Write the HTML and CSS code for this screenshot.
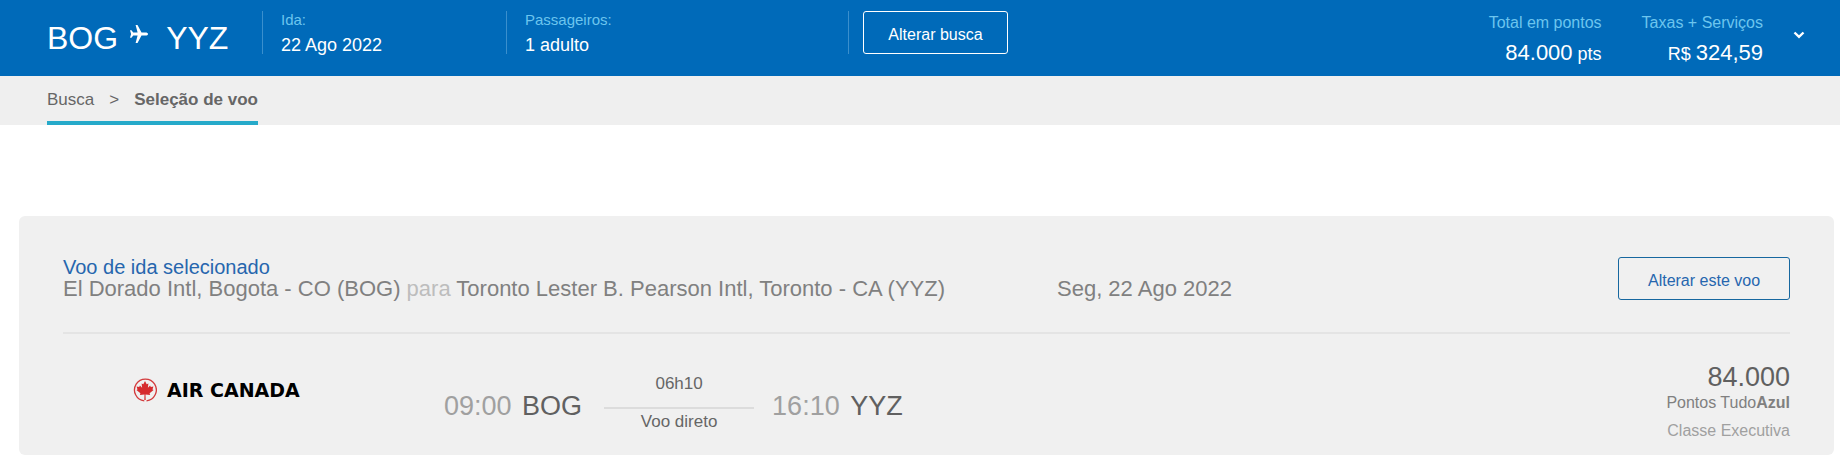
FILE: index.html
```
<!DOCTYPE html>
<html lang="pt-BR">
<head>
    <meta charset="UTF-8">
    <meta name="viewport" content="width=device-width, initial-scale=1.0">
    <title>Seleção de voo</title>
    <link rel="stylesheet" href="styles.css">
</head>
<body>
    <header class="header">
        <div class="trip">
            <span>BOG</span>
            <svg class="plane" viewBox="0 0 18 18" width="18" height="18">
                <path d="M18 9c0-1-1.200-1.500-2.400-1.500H11.500L7.500 0H5.600L7.600 7.500H3.200L1.500 5.200H0L1.100 9 0 12.800h1.500l1.700-2.300h4.400L5.600 18h1.900l4-7.500h4.100C16.800 10.500 18 10 18 9z" fill="#fff"/>
            </svg>
            <span>YYZ</span>
        </div>
        <div class="field date-field">
            <div class="label">Ida:</div>
            <div class="value">22 Ago 2022</div>
        </div>
        <div class="field passengers">
            <div class="label">Passageiros:</div>
            <div class="value">1 adulto</div>
        </div>
        <div class="change">
            <button class="btn btn-light" type="button">Alterar busca</button>
        </div>
        <div class="totals">
            <div class="total">
                <div class="total-label">Total em pontos</div>
                <div class="total-value"><b>84.000</b> pts</div>
            </div>
            <div class="total">
                <div class="total-label">Taxas + Serviços</div>
                <div class="total-value">R$ <b>324,59</b></div>
            </div>
            <button class="toggle" type="button" aria-label="Detalhes">
                <svg viewBox="0 0 12 8" width="12" height="8">
                    <path d="M1.500 1.500L6 5.800l4.500-4.300" fill="none" stroke="#fff" stroke-width="2.400"/>
                </svg>
            </button>
        </div>
    </header>

    <nav class="breadcrumb">
        <div class="steps">
            <a href="#">Busca</a>
            <span>&gt;</span>
            <strong>Seleção de voo</strong>
        </div>
    </nav>

    <main class="card">
        <div class="card-top">
            <div>
                <h2>Voo de ida selecionado</h2>
                <div class="route">
                    <div class="airports">El Dorado Intl, Bogota - CO (BOG) <span class="to">para</span> Toronto Lester B. Pearson Intl, Toronto - CA (YYZ)</div>
                    <div>Seg, 22 Ago 2022</div>
                </div>
            </div>
            <button class="btn btn-blue" type="button">Alterar este voo</button>
        </div>
        <div class="details">
            <div class="airline">
                <svg viewBox="0 0 24 24" width="24" height="24">
                    <path d="M11.300 22.800A10.900 10.900 0 1 1 13.500 22.800" fill="none" stroke="#d33a3c" stroke-width="1.300"/>
                    <path d="M12 3l1.700 3.300 1.700-.8-.5 4.300 2.200-2.200.7 1.400 2.600-.4-.9 2.800 1.100.7-4 3.100.5 1.800-4.600-.5.200 5.500h-1.400l.2-5.500-4.600.5.500-1.800-4-3.100 1.100-.7-.9-2.800 2.600.4.700-1.400 2.200 2.200-.5-4.300 1.700.8z" fill="#d62b2e"/>
                </svg>
                <span>AIR CANADA</span>
            </div>
            <div class="flight">
                <div class="time">09:00 <span>BOG</span></div>
                <div class="duration">
                    <div>06h10</div>
                    <div class="line"></div>
                    <div>Voo direto</div>
                </div>
                <div class="time">16:10 <span>YYZ</span></div>
            </div>
            <div class="price">
                <div class="points">84.000</div>
                <div class="program">Pontos Tudo<b>Azul</b></div>
                <div class="class">Classe Executiva</div>
            </div>
        </div>
    </main>
</body>
</html>
```
FILE: styles.css
```
* {
    box-sizing: border-box;
}
body {
    margin: 0;
    font-family: "Liberation Sans", Arial, sans-serif;
    font-size: 16px;
    background-color: #fff;
}
.btn {
    height: 43px;
    padding: 4px 0 0;
    border-radius: 3px;
    background: none;
    font-family: inherit;
    font-size: 16px;
    cursor: pointer;
}

/* header */
.header {
    display: flex;
    align-items: flex-start;
    padding: 11px 35px 8px 47px;
    background-color: #006ab9;
    color: #fff;
}
.trip {
    display: flex;
    flex: none;
    width: 215px;
    padding-top: 5px;
    font-size: 32px;
    line-height: 44px;
}
.plane {
    margin: 9px 18px 0 12px;
}
.field, .change {
    flex: none;
    height: 43px;
    border-left: 1px solid #3a8fcd;
}
.field {
    padding-left: 18px;
}
.date-field {
    width: 244px;
}
.passengers {
    width: 342px;
}
.change {
    padding-left: 14px;
}
.label {
    margin-bottom: 5px;
    font-size: 15px;
    line-height: 18px;
    color: #6cc5ee;
}
.value {
    font-size: 18px;
    line-height: 22px;
}
.btn-light {
    width: 145px;
    border: 1px solid #fff;
    color: #fff;
}
.totals {
    display: flex;
    gap: 40px;
    margin-left: auto;
    text-align: right;
}
.total-label {
    margin: 2px 0 6px;
    line-height: 20px;
    color: #6cc5ee;
}
.total-value {
    font-size: 18px;
    line-height: 28px;
}
.total-value b {
    font-size: 22px;
    font-weight: normal;
}
.toggle {
    display: flex;
    margin: 20px 0 0 -10px;
    padding: 0;
    border: none;
    background: none;
    cursor: pointer;
}

/* breadcrumb */
.breadcrumb {
    display: flex;
    padding-left: 47px;
    background-color: #efefef;
    font-size: 17px;
    line-height: 20px;
    color: #666;
}
.steps {
    display: flex;
    gap: 15px;
    padding: 14px 0 11px;
    border-bottom: 4px solid #26aaca;
}
.steps a {
    color: inherit;
    text-decoration: none;
}

/* selected flight */
.card {
    margin: 91px 6px 5px 19px;
    padding: 41px 44px 13px;
    border-radius: 6px;
    background-color: #f0f0f0;
}
.card-top {
    display: flex;
    justify-content: space-between;
    padding-bottom: 31px;
    border-bottom: 2px solid #e4e4e4;
}
h2 {
    margin: 0;
    font-size: 20px;
    font-weight: normal;
    line-height: 20px;
    color: #2666ae;
}
.route {
    display: flex;
    font-size: 22px;
    line-height: 24px;
    color: #808080;
}
.airports {
    width: 994px;
}
.to {
    color: #bdbdbd;
}
.btn-blue {
    width: 172px;
    border: 1px solid #16679f;
    color: #2666ae;
}
.details {
    display: flex;
    align-items: flex-start;
    padding-top: 28px;
}
.airline {
    display: flex;
    align-items: center;
    gap: 10px;
    width: 381px;
    padding: 16px 0 0 70px;
    font-family: "DejaVu Sans", sans-serif;
    font-size: 19px;
    font-weight: bold;
    line-height: 24px;
    color: #000;
}
.flight {
    display: flex;
    padding-top: 12px;
}
.time {
    padding-top: 17px;
    font-size: 27px;
    line-height: 30px;
    color: #a0a0a0;
}
.time span {
    margin-left: 3px;
    color: #606060;
}
.duration {
    width: 150px;
    margin: 0 18px 0 22px;
    font-size: 17px;
    line-height: 20px;
    text-align: center;
    color: #666;
}
.line {
    height: 2px;
    margin: 13px 0 3px;
    background-color: #dcdcdc;
}
.price {
    margin-left: auto;
    text-align: right;
}
.points {
    font-size: 27px;
    line-height: 30px;
    color: #606060;
}
.program {
    margin-bottom: 6px;
    line-height: 22px;
    color: #808080;
}
.class {
    line-height: 22px;
    color: #a0a0a0;
}
```
